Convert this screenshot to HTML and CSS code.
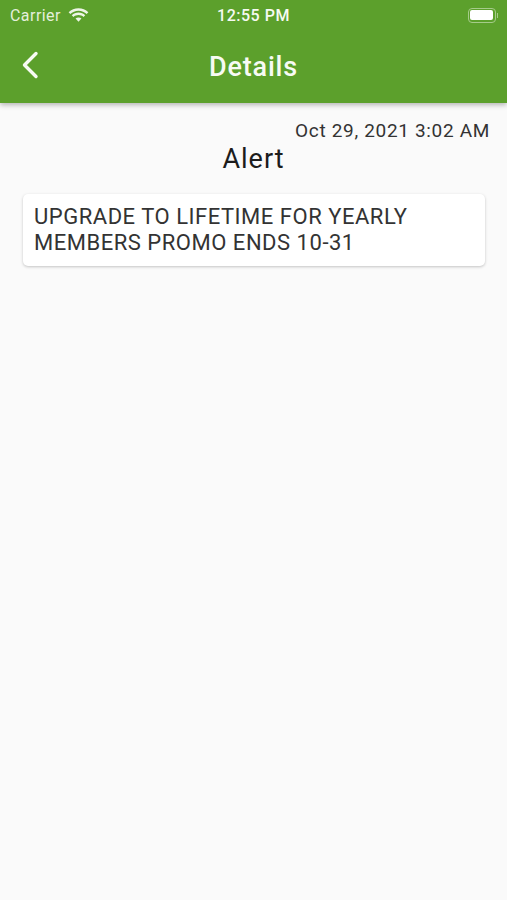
FILE: index.html
```html
<!DOCTYPE html>
<html lang="en">
<head>
<meta charset="utf-8">
<title>Details</title>
<link rel="stylesheet" href="styles.css">
</head>
<body>
<header class="appbar">
  <div class="status">
    <div class="status-left">
      <span class="carrier">Carrier</span>
      <svg class="wifi" width="21" height="15" viewBox="0 0 20 14"><path d="M10 2.400c3 0 5.800 1.200 7.800 3.100l1.600-1.700C16.900 1.400 13.600 0 10 0S3.100 1.400.6 3.800l1.600 1.700C4.200 3.600 7 2.400 10 2.400z" fill="#eef5e8"/><path d="M10 6.600c1.900 0 3.500.7 4.800 1.800l1.600-1.700C14.700 5.100 12.500 4.200 10 4.200S5.300 5.100 3.600 6.700l1.600 1.700C6.500 7.300 8.100 6.600 10 6.600z" fill="#eef5e8"/><path d="M10 8.800c-1.100 0-2 .4-2.800 1l2.800 3.200 2.800-3.200c-.8-.6-1.700-1-2.800-1z" fill="#eef5e8"/></svg>
    </div>
    <span class="clock">12:55 PM</span>
    <div class="battery"><span class="battery-body"><span class="battery-fill"></span></span><span class="battery-cap"></span></div>
  </div>
  <div class="toolbar">
    <svg class="back" width="18" height="28" viewBox="0 0 18 28"><path d="M15 2.500 3.500 14 15 25.500" fill="none" stroke="#f7fbf4" stroke-width="3.400" stroke-linecap="round" stroke-linejoin="round"/></svg>
    <h1 class="title">Details</h1>
  </div>
</header>
<main class="content">
  <p class="date">Oct 29, 2021 3:02 AM</p>
  <h2 class="heading">Alert</h2>
  <section class="card">UPGRADE TO LIFETIME FOR YEARLY MEMBERS PROMO ENDS 10-31</section>
</main>
</body>
</html>
```
FILE: styles.css
```css
* { box-sizing: border-box; }
html, body { margin: 0; height: 100%; }
body {
  background: #fafafa;
  font-family: Roboto, "Liberation Sans", sans-serif;
  color: #212121;
  height: 900px;
  overflow: hidden;
}
.appbar {
  height: 103px;
  background: #5ca02c;
  box-shadow: 0 2px 5px rgba(0,0,0,.28);
  color: #fff;
}
.status {
  height: 30px;
  padding: 0 10px;
  display: grid;
  grid-template-columns: 1fr auto 1fr;
  align-items: center;
}
.status-left { display: flex; align-items: center; gap: 7px; }
.carrier { font-size: 16px; color: #e4efdb; letter-spacing: .45px; }
.wifi { margin-top: 0; }
.clock { font-size: 16px; font-weight: 500; letter-spacing: .5px; color: #f6faf2; }
.battery { justify-self: end; display: flex; align-items: center; margin-right: -1px; }
.battery-body {
  width: 28px; height: 15px;
  border: 1.500px solid #a5cb8a;
  border-radius: 4px;
  padding: 1.500px;
  display: flex;
}
.battery-fill { flex: 1; background: #fff; border-radius: 2px; }
.battery-cap { width: 1.500px; height: 5px; background: #a5cb8a; margin-left: 1px; }
.toolbar {
  height: 73px;
  position: relative;
  display: flex;
  align-items: center;
  justify-content: center;
}
.back { position: absolute; left: 21px; top: 21px; }
.title { margin: 0; font-size: 27px; font-weight: 500; letter-spacing: .8px; color: #f7fbf4; }
.content { padding: 17px 17px 0 23px; }
.date { margin: 0; text-align: right; font-size: 19px; line-height: 22px; letter-spacing: .67px; color: #333; }
.heading { margin: 1px 6px 0 0; text-align: center; font-size: 27px; line-height: 32px; font-weight: 400; letter-spacing: 1px; color: #1c1c1c; }
.card {
  margin: 19px 5px 0 0;
  background: #fff;
  border-radius: 5px;
  box-shadow: 0 1px 3px rgba(0,0,0,.22);
  padding: 10px 11px 11px;
  font-size: 22px;
  line-height: 26px;
  letter-spacing: .52px;
  color: #333;
  height: 72px;
}
```
